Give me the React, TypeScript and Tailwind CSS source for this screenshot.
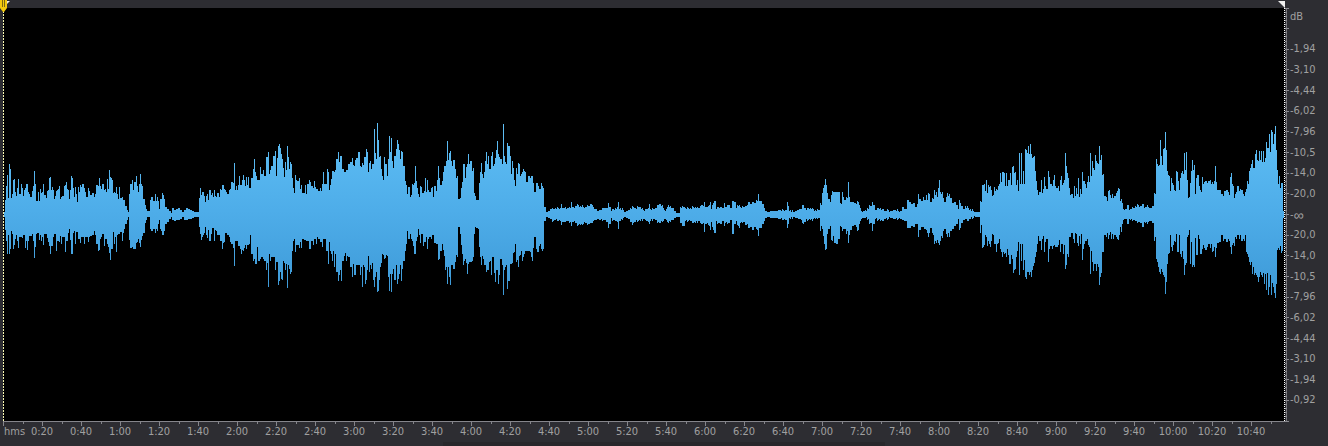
import React from 'react';

// Peaks of the clip, one "x:above:below" entry per sample
const PEAKS = `
4:2:2 5:14:15 6:28:26 7:39:39 8:16:20 9:50:39 10:45:34 11:16:16 12:20:19 13:34:34 14:35:30 15:22:24 16:18:20 17:26:26 18:35:33 19:20:22 20:20:22 21:30:22 22:26:23 23:18:20 24:24:20
25:26:33 26:30:26 27:30:35 28:22:26 29:20:21 30:17:21 32:23:19 33:28:26 34:43:43 35:30:32 36:13:19 37:13:18 38:22:18 39:13:25 40:25:20 41:21:26 42:22:22 43:30:30 44:19:19 46:16:19
47:23:23 48:24:27 49:36:31 50:37:39 51:24:31 52:27:31 53:24:22 54:15:19 55:18:19 56:23:36 57:24:26 58:25:26 59:28:27 60:15:21 61:17:29 62:18:22 64:28:22 65:29:37 66:32:26 67:25:26
68:24:18 69:15:14 70:24:25 71:38:39 72:36:39 73:26:18 74:17:16 75:27:29 76:20:17 77:12:17 78:27:24 79:22:24 80:29:28 81:27:22 82:30:22 84:26:29 85:22:22 86:17:22 88:26:27 89:23:22
90:19:21 92:21:20 94:17:16 95:20:20 96:29:29 98:28:36 99:36:35 100:28:24 101:25:22 102:30:19 104:24:31 105:25:24 106:22:24 107:35:29 108:25:32 109:44:38 110:37:45 111:36:34
112:34:34 113:21:17 114:22:29 115:21:22 116:27:37 117:20:20 118:15:19 119:27:19 120:16:17 122:17:26 123:14:18 124:14:14 125:8:9 127:4:5 128:2:2 129:20:25 130:30:33 132:34:32
133:24:34 134:32:34 136:38:28 137:28:27 138:22:24 139:30:28 140:40:32 141:30:25 142:28:21 143:15:18 145:9:8 146:5:5 147:3:2 149:3:2 150:14:14 151:17:16 153:13:14 155:20:18
156:13:14 157:17:16 158:13:9 159:5:5 160:15:14 161:15:16 162:21:20 163:19:20 164:15:16 165:7:9 167:5:7 169:3:4 171:1:2 172:6:5 174:4:6 176:5:5 178:6:5 180:4:4 182:2:2 184:4:5 186:6:5
188:5:4 190:4:4 192:3:3 194:2:2 198:2:2 199:16:12 200:26:19 201:19:25 202:22:22 203:22:20 204:18:18 205:12:12 206:18:20 207:20:23 208:14:15 209:24:26 211:19:19 212:21:13 213:17:13
214:24:26 215:18:15 216:17:16 217:21:20 219:17:20 220:25:26 221:24:26 222:29:34 223:29:28 224:25:27 225:24:18 226:22:18 227:20:20 228:20:20 229:24:22 230:25:27 231:32:29 233:31:33
234:51:51 235:24:26 236:28:26 237:24:26 238:29:31 239:38:31 240:29:34 241:29:39 242:34:35 243:39:36 244:34:33 245:28:30 246:37:34 247:29:30 248:37:30 249:26:29 250:26:20 251:36:39
253:45:46 254:55:44 255:42:49 256:38:49 257:34:32 258:34:46 260:47:44 261:40:42 263:44:44 264:38:46 265:38:46 266:57:55 267:57:48 268:62:72 269:40:39 270:44:46 271:48:42 273:58:42
275:63:55 276:38:47 277:56:47 278:68:70 279:70:66 280:66:57 281:60:64 282:55:65 283:46:46 284:37:48 285:52:55 286:44:49 287:68:73 288:57:50 289:45:54 290:52:59 291:50:57 292:36:36
293:26:26 294:21:24 295:39:37 296:34:30 297:33:30 299:36:33 300:25:27 301:29:33 302:21:24 304:21:25 305:29:25 306:20:26 307:30:26 309:34:34 310:32:34 311:28:26 313:26:30 314:33:24
315:27:24 316:25:29 317:25:22 318:23:24 320:26:27 321:23:27 322:30:32 323:42:24 324:30:24 326:30:36 327:45:36 328:42:49 329:24:27 330:29:36 331:35:39 332:43:46 333:43:36 334:42:52
335:44:39 336:55:57 338:62:66 339:52:60 340:58:55 341:58:66 342:45:46 344:42:41 345:42:38 346:44:46 347:44:41 348:50:42 350:52:52 352:56:62 353:49:49 354:48:60 355:54:60 356:56:50
358:62:50 360:48:60 361:47:52 362:51:72 363:49:50 364:57:52 365:57:69 366:65:65 367:62:55 368:42:41 369:51:57 370:53:50 371:45:54 372:50:48 373:50:65 374:85:72 375:61:62 376:55:57
377:91:77 378:74:76 379:57:65 380:58:52 381:45:48 382:38:39 383:34:40 384:57:44 385:50:43 386:50:40 387:38:41 388:55:62 389:78:76 390:62:59 391:76:77 392:53:59 393:46:54 394:58:65
396:65:50 397:74:69 398:70:64 399:64:59 400:55:50 401:63:66 402:62:54 403:48:46 405:33:36 406:29:29 407:20:16 408:27:24 410:17:19 411:19:24 412:30:26 413:29:31 414:31:39 415:48:39
416:33:26 417:26:22 418:20:14 419:17:20 420:28:28 421:27:19 422:21:19 423:21:31 424:23:27 425:36:27 426:22:22 427:34:34 428:24:24 429:22:22 431:26:24 432:27:20 433:17:20 434:28:28
436:23:29 437:34:29 438:48:45 439:36:44 440:29:36 442:33:29 443:42:35 444:48:41 445:48:55 446:53:52 447:73:69 448:54:52 449:61:62 450:63:70 451:53:50 452:48:50 453:54:54 455:45:47
456:36:40 457:38:42 458:15:12 460:16:19 461:26:30 462:32:39 463:50:50 464:50:46 465:36:44 466:47:48 467:50:59 468:60:49 469:50:47 470:53:47 472:43:46 473:46:42 474:21:19 475:18:12
476:14:13 478:14:14 479:31:32 480:42:42 481:51:50 482:40:41 483:36:44 484:42:50 485:53:50 486:62:57 487:50:55 488:58:55 489:45:47 490:45:46 491:58:60 492:62:42 493:48:42 494:50:58
495:56:67 496:64:55 497:73:55 498:60:69 499:57:60 500:55:44 502:50:50 503:90:80 504:58:55 505:52:52 506:50:50 507:71:74 508:68:66 510:58:49 511:40:49 512:53:48 513:46:38 514:34:37
515:28:29 516:46:47 517:40:45 518:51:52 519:50:41 520:38:40 521:40:36 522:42:46 523:45:42 524:43:39 525:42:36 526:32:36 528:38:36 530:36:37 531:38:42 532:38:46 533:31:33 534:22:22
536:31:34 537:31:37 538:28:37 539:25:31 540:25:29 541:31:34 542:28:36 543:26:34 544:7:6 546:2:2 549:3:3 550:5:4 552:5:6 556:6:5 560:6:6 561:10:10 562:6:7 564:7:8 567:6:6 569:7:8
570:6:7 571:12:11 572:6:6 575:8:8 577:9:10 580:8:10 584:7:8 588:8:9 590:10:8 592:8:7 595:5:5 597:3:4 600:4:5 604:6:5 606:6:7 608:11:13 609:7:9 611:4:4 614:5:6 617:7:7 618:12:14
619:6:7 622:5:4 625:2:2 628:4:4 632:7:9 636:6:6 639:8:6 643:4:4 646:5:6 648:6:7 649:10:9 650:5:6 653:5:4 656:7:6 659:10:8 661:9:7 665:3:4 668:9:8 672:6:5 674:3:3 676:1:2 679:1:2
680:7:8 683:7:11 685:6:6 690:6:6 694:7:8 698:6:6 701:9:9 703:8:8 704:12:17 705:7:9 707:6:7 710:12:15 711:6:8 714:13:18 716:6:7 720:7:9 722:6:6 724:11:11 725:7:8 728:9:8 730:6:5
732:13:19 734:12:9 736:7:7 739:9:13 740:7:8 743:7:7 745:8:10 747:9:9 748:12:13 750:10:12 752:12:15 754:11:12 756:14:14 757:13:15 758:20:21 759:13:13 761:13:13 762:10:9 764:6:6 765:3:3
768:2:2 772:3:3 776:3:3 780:4:4 785:4:5 787:12:13 788:8:9 789:4:4 793:2:2 796:3:3 800:5:4 803:9:9 804:6:7 806:5:5 810:6:5 814:4:4 818:4:3 820:11:16 821:9:11 822:21:14 823:26:21
824:29:29 825:35:35 826:29:34 827:21:19 828:15:14 830:12:11 831:19:25 832:23:26 833:22:21 834:22:28 836:22:29 838:22:24 840:11:11 841:10:12 842:22:16 843:17:14 844:14:14 846:17:19
847:16:16 848:32:28 849:17:20 850:12:15 852:12:11 854:11:10 856:10:12 857:13:16 858:12:15 859:9:9 860:6:6 861:3:4 862:2:3 865:4:3 868:5:4 869:9:9 870:8:8 872:12:16 873:9:9 875:4:4
878:6:5 882:5:6 884:3:4 886:4:4 890:3:3 895:4:4 900:3:4 902:7:5 904:5:6 906:5:6 907:14:13 909:12:13 911:10:11 913:11:12 915:7:9 917:10:9 918:20:22 919:15:15 921:13:12 923:17:12
924:14:14 926:19:15 927:14:18 928:21:22 929:20:18 930:12:13 932:16:18 933:15:20 934:24:29 935:19:26 936:22:28 937:17:25 938:26:28 939:34:30 940:22:26 941:20:21 942:22:23 943:16:16
944:12:14 946:17:19 947:21:22 948:18:18 949:20:22 950:16:16 952:11:14 954:12:11 956:9:9 958:5:4 959:14:15 960:11:13 961:8:8 963:5:5 965:8:4 968:6:6 971:4:3 975:2:2 979:2:2 980:13:18
981:12:10 982:29:33 983:29:32 984:30:30 985:23:20 986:34:22 987:21:31 988:29:26 989:27:29 990:28:32 991:24:26 992:18:19 993:19:20 994:27:29 995:23:29 996:25:37 997:24:29 998:28:28
999:30:24 1000:41:34 1001:32:37 1002:42:42 1003:42:37 1004:41:39 1005:28:38 1006:41:42 1007:28:34 1008:34:40 1009:34:49 1010:41:49 1011:29:40 1012:47:44 1013:48:58 1014:41:55
1015:42:54 1016:29:42 1017:34:36 1018:23:27 1019:61:60 1020:30:29 1021:61:46 1022:30:29 1023:43:55 1024:30:45 1025:65:62 1026:64:64 1027:61:57 1028:68:57 1029:60:60 1030:70:57
1031:60:62 1032:56:55 1033:57:51 1034:58:48 1035:43:42 1036:33:37 1037:24:29 1038:19:21 1039:22:26 1041:34:35 1042:21:24 1043:25:21 1044:37:37 1045:28:27 1046:25:24 1048:43:47
1049:37:34 1050:30:31 1052:28:34 1053:34:31 1054:39:30 1055:28:32 1056:26:32 1058:28:30 1059:23:25 1060:34:37 1061:38:29 1062:29:29 1063:31:39 1064:34:30 1065:61:54 1066:48:50
1067:41:39 1068:36:42 1069:26:22 1070:19:22 1071:20:18 1073:16:24 1074:28:28 1075:18:18 1076:26:19 1077:20:28 1078:36:31 1079:17:21 1080:25:29 1081:20:19 1082:42:45 1083:33:34
1084:33:29 1085:30:26 1086:26:26 1087:32:24 1088:38:30 1089:32:32 1090:61:59 1091:38:36 1092:53:47 1093:46:56 1094:44:49 1095:59:49 1096:53:56 1097:51:49 1098:50:52 1099:68:70
1100:54:62 1101:59:58 1102:39:37 1103:40:37 1104:18:20 1106:17:22 1107:13:18 1108:23:24 1109:24:20 1110:19:17 1111:16:24 1112:20:19 1113:16:24 1114:18:20 1116:21:22 1117:23:24
1118:26:25 1119:25:20 1120:13:12 1121:15:17 1122:11:9 1123:5:5 1126:5:4 1127:9:9 1129:5:5 1133:6:5 1137:9:7 1140:8:8 1143:10:12 1144:7:8 1147:8:8 1150:6:6 1152:8:8 1154:21:26
1155:20:22 1156:55:44 1157:50:47 1158:48:52 1159:49:57 1160:74:59 1161:58:54 1162:49:57 1163:65:60 1164:66:62 1165:82:79 1166:64:67 1167:43:49 1168:39:39 1169:38:38 1170:23:20
1171:36:32 1172:31:36 1173:29:30 1174:24:26 1175:23:27 1176:43:19 1177:42:37 1178:33:37 1179:24:20 1180:36:39 1181:41:42 1182:43:36 1183:40:44 1184:61:60 1185:44:50 1186:62:48
1187:34:22 1188:16:20 1189:17:15 1190:31:49 1191:43:27 1192:54:52 1193:44:50 1194:49:52 1195:20:23 1196:36:40 1197:39:40 1198:39:20 1199:28:24 1200:24:39 1201:22:39 1202:37:34
1203:30:30 1204:32:33 1205:33:35 1207:31:32 1208:33:29 1210:34:33 1211:30:29 1212:32:37 1213:30:36 1214:33:32 1215:48:42 1216:32:33 1217:24:28 1219:24:27 1221:20:20 1223:18:26
1224:23:24 1226:24:27 1228:22:24 1229:19:26 1230:37:32 1231:41:39 1232:30:30 1233:28:28 1234:16:31 1235:20:22 1236:22:24 1237:28:20 1239:23:24 1240:25:20 1241:24:26 1243:20:24
1244:18:26 1245:22:20 1246:25:37 1247:33:39 1248:30:42 1249:43:47 1250:46:50 1251:50:47 1252:54:59 1253:46:52 1254:46:60 1255:60:58 1256:64:60 1257:54:62 1258:53:67 1259:63:62
1260:54:57 1261:63:60 1262:52:62 1263:63:58 1264:52:69 1265:56:59 1266:72:75 1267:66:58 1268:66:80 1269:80:72 1270:62:60 1271:84:80 1272:82:68 1273:70:72 1274:80:78 1275:88:83
1276:64:69 1277:44:35 1278:30:33 1279:38:35 1280:26:31 1281:31:38 1282:31:36 1283:3:3 1284:3:3
`;

const MID = 206;

const samples = PEAKS.trim()
  .split(/\s+/)
  .map(entry => entry.split(':').map(Number));

// Stepped outline: tops from left to right, then bottoms back again.
// Wide gaps in the quiet parts are ramped, with a little ripple on top.
function buildWavePath() {
  const columns: Array<{ x: number; up: number; down: number }> = [];
  samples.slice(0, -1).forEach(([x, up, down], i) => {
    const [nextX, nextUp, nextDown] = samples[i + 1];
    const gap = nextX - x;
    for (let k = 0; k < gap; k++) {
      const t = gap > 2 ? k / gap : 0;
      const ripple = gap > 2 && up > 3 ? [0, -1, 1, 0, -1][(x + k) % 5] : 0;
      columns.push({
        x: x + k - 4,
        up: Math.round(up + (nextUp - up) * t) + ripple,
        down: Math.round(down + (nextDown - down) * t) + ripple,
      });
    }
  });
  const top = columns.map(c => `L${c.x} ${MID - c.up}H${c.x + 1}`).join('');
  const bottom = [...columns].reverse().map(c => `L${c.x + 1} ${MID + c.down}H${c.x}`).join('');
  return `M0 ${MID}${top}${bottom}Z`;
}

const wavePath = buildWavePath();

const DB_LABELS = [
  '', '-1,94', '-3,10', '-4,44', '-6,02', '-7,96', '-10,5', '-14,0', '-20,0', '-∞',
  '-20,0', '-14,0', '-10,5', '-7,96', '-6,02', '-4,44', '-3,10', '-1,94', '-0,92',
];

const TIME_LABELS = Array.from({ length: 32 }, (_, i) => {
  const seconds = (i + 1) * 20;
  return `${Math.floor(seconds / 60)}:${String(seconds % 60).padStart(2, '0')}`;
});

const Playhead: React.FC = () => (
  <svg width="10" height="12" className="absolute left-0 top-0" aria-hidden="true">
    <path d="M5 1h5L7 4z" fill="#e8e8e8" />
    <path d="M0 0h7v8L4 12H3L0 8z" fill="#f2c90f" />
    <path d="M2.5 0v7M4.5 0v7" stroke="#7a6812" shapeRendering="crispEdges" />
  </svg>
);

const Waveform: React.FC = () => (
  <svg
    viewBox="0 0 1280 412"
    preserveAspectRatio="none"
    className="block h-full w-full"
    role="img"
    aria-label="Waveform"
  >
    <defs>
      <linearGradient id="wave" gradientUnits="userSpaceOnUse" x1="0" y1="112" x2="0" y2="292">
        <stop offset="0" stopColor="#60c0f6" />
        <stop offset="0.5" stopColor="#4eade9" />
        <stop offset="1" stopColor="#3c98d6" />
      </linearGradient>
    </defs>
    <path d={wavePath} fill="url(#wave)" shapeRendering="crispEdges" />
  </svg>
);

const TimeRuler: React.FC = () => (
  <div className="flex h-[21px] shrink-0 border-t border-[#85858b]">
    <div className="min-w-0 flex-[39] whitespace-nowrap">
      <div className="h-1 w-px bg-[#85858b]"></div>
      <div className="pl-px leading-3">hms</div>
    </div>
    {TIME_LABELS.map(label => (
      <div key={label} className="flex min-w-0 flex-[78] flex-col items-center">
        <div className="flex h-1 w-full items-start">
          <span className="h-[2px] w-px bg-[#85858b]"></span>
          <span className="flex-1"></span>
          <span className="h-1 w-px bg-[#85858b]"></span>
          <span className="flex-1"></span>
        </div>
        <span className="leading-3">{label}</span>
      </div>
    ))}
    <div className="min-w-0 flex-[29]">
      <div className="h-[2px] w-px bg-[#85858b]"></div>
    </div>
  </div>
);

const DecibelRuler: React.FC = () => (
  <aside className="flex w-[43px] shrink-0 flex-col pb-[21px] pt-2">
    <div className="flex min-h-0 flex-1">
      <svg className="h-full w-[5px] overflow-visible" shapeRendering="crispEdges" aria-hidden="true">
        <line x1="1" x2="1" y1="0" y2="100%" stroke="#77777c" />
        {Array.from({ length: 101 }, (_, i) => (
          <line
            key={i}
            x1="0"
            x2={i % 5 === 0 ? 4 : 2}
            y1={`${i}%`}
            y2={`${i}%`}
            stroke="#8a8a90"
          />
        ))}
      </svg>
      <div className="flex flex-1 flex-col">
        <div className="min-h-0 flex-1 leading-[18px]">dB</div>
        {DB_LABELS.map((label, i) => (
          <div key={i} className="flex min-h-0 flex-[2] items-center whitespace-nowrap leading-4">
            {label === '-∞' ? (
              <>
                -<span className="font-['Liberation_Sans',sans-serif] text-sm leading-4">∞</span>
              </>
            ) : (
              label
            )}
          </div>
        ))}
        <div className="min-h-0 flex-1"></div>
      </div>
    </div>
  </aside>
);

export default function App() {
  return (
    <div className="flex h-screen flex-col overflow-hidden bg-[#2d2d32] font-['DejaVu_Sans_Condensed','DejaVu_Sans',sans-serif] text-[11px] text-[#a0a0a0]">
      <div className="relative flex min-h-0 flex-1">
        <Playhead />
        <main className="flex min-w-0 flex-1 flex-col pl-[3px]">
          <div className="flex h-2 shrink-0 items-end justify-end">
            <svg width="7" height="7" aria-hidden="true">
              <path d="M0 0h7v7z" fill="#f0f0f0" />
            </svg>
          </div>
          <div className="flex min-h-0 flex-1 bg-black">
            <div className="w-px bg-[repeating-linear-gradient(#f5f5b0_0_2px,#000_2px_3px)]"></div>
            <div className="min-w-0 flex-1">
              <Waveform />
            </div>
            <div className="w-px bg-[repeating-linear-gradient(#ffffff_0_1px,#000_1px_2px)]"></div>
          </div>
          <TimeRuler />
        </main>
        <DecibelRuler />
      </div>
      <footer className="flex h-1 shrink-0 justify-center">
        <div className="w-1/3 bg-[#28272b]"></div>
      </footer>
    </div>
  );
}
